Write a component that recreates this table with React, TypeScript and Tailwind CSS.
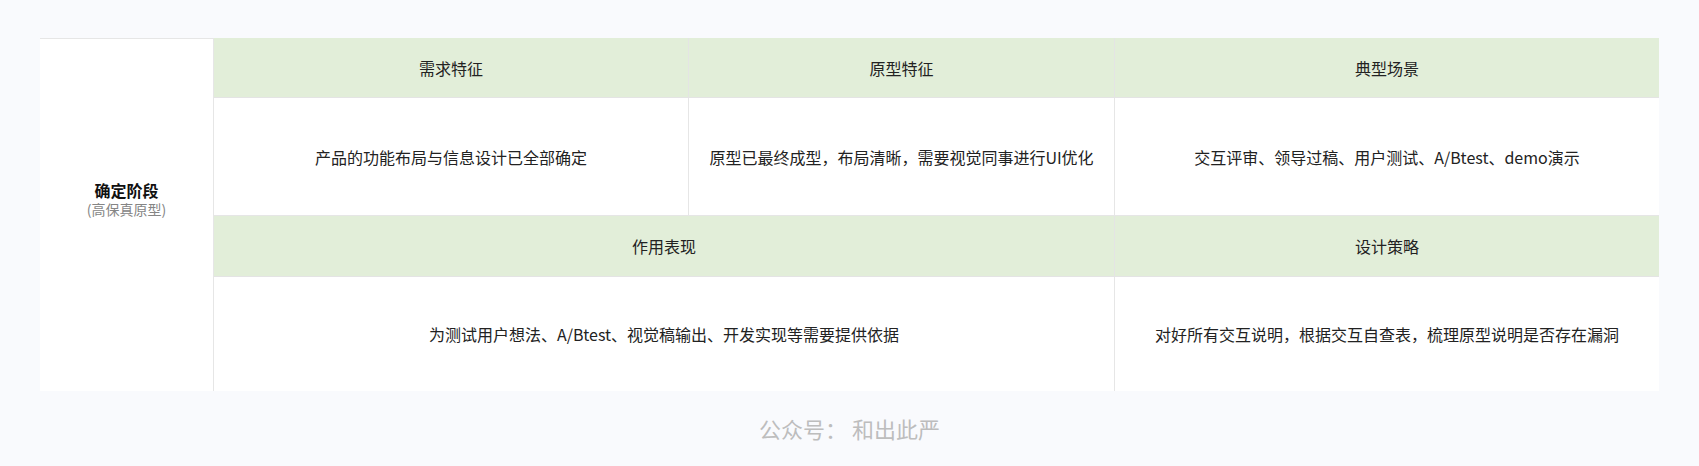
const font = { fontFamily: '"Noto Sans CJK SC", "Noto Sans", sans-serif' }

const headCell = 'flex items-center justify-center border-r border-b border-[#e4e4e4] bg-[#e2eed9] text-[16px] text-[#222]'
const bodyCell = 'flex items-center justify-center border-r border-b border-[#e6e6e6] bg-white text-[16px] text-[#222]'

export default function App() {
  return (
    <div className="h-[466px] w-full bg-[#f9fafd] pt-[38px]" style={font}>
      <div className="mx-10 flex">
        <div className="flex w-[174px] shrink-0 flex-col items-center justify-center border-r border-t border-[#e6e6e6] bg-white pb-8">
          <p className="text-[16px] font-bold leading-[20px] text-[#111]">确定阶段</p>
          <p className="text-[14px] leading-[18px] text-[#858585]">(高保真原型)</p>
        </div>
        <div className="grid flex-1 grid-cols-[475px_426px_1fr] grid-rows-[60px_118px_61px_114px]">
          <div className={headCell}>需求特征</div>
          <div className={headCell}>原型特征</div>
          <div className={`${headCell} border-r-0`}>典型场景</div>

          <div className={bodyCell}>产品的功能布局与信息设计已全部确定</div>
          <div className={bodyCell}>原型已最终成型，布局清晰，需要视觉同事进行UI优化</div>
          <div className={`${bodyCell} border-r-0`}>交互评审、领导过稿、用户测试、A/Btest、demo演示</div>

          <div className={`${headCell} col-span-2`}>作用表现</div>
          <div className={`${headCell} border-r-0`}>设计策略</div>

          <div className={`${bodyCell} col-span-2 border-b-0`}>为测试用户想法、A/Btest、视觉稿输出、开发实现等需要提供依据</div>
          <div className={`${bodyCell} border-r-0 border-b-0`}>对好所有交互说明，根据交互自查表，梳理原型说明是否存在漏洞</div>
        </div>
      </div>
      <p className="mt-[22px] text-center text-[22px] leading-[30px] text-[#bdbdbd]">公众号： 和出此严</p>
    </div>
  )
}
